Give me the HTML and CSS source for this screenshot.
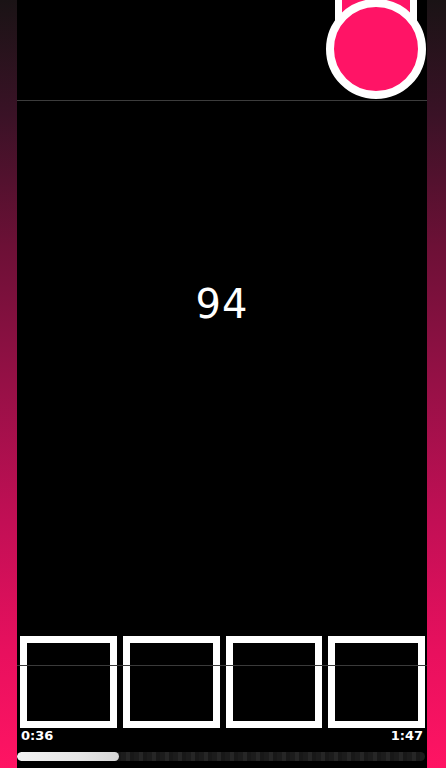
FILE: index.html
```html
<!DOCTYPE html>
<html>
<head>
<meta charset="utf-8">
<link rel="stylesheet" href="styles.css">
</head>
<body>
<div class="frame">
  <main class="screen">
    <header class="top">
      <div class="knob-stem"></div>
      <div class="knob"></div>
    </header>
    <section class="middle">
      <div class="count">94</div>
    </section>
    <footer class="bottom">
      <div class="frames">
        <div class="thumb"></div>
        <div class="thumb"></div>
        <div class="thumb"></div>
        <div class="thumb"></div>
      </div>
      <div class="times">
        <span>0:36</span>
        <span>1:47</span>
      </div>
      <div class="progress"><div class="progress-fill" style="width:25%"></div></div>
    </footer>
  </main>
</div>
</body>
</html>
```
FILE: styles.css
```css
html, body {
  margin: 0;
  padding: 0;
  height: 768px;
  overflow: hidden;
}
body {
  background: linear-gradient(180deg, #1a1315 0%, #3a1226 15%, #6c1036 32%, #961046 50%, #c20f55 68%, #e8105e 85%, #ff1463 100%);
  font-family: "Open Sans", "DejaVu Sans", sans-serif;
}
.frame {
  display: flex;
  height: 768px;
  padding: 0 19px 0 17px;
}
.screen {
  flex: 1;
  background: #000;
  display: flex;
  flex-direction: column;
  position: relative;
}
.top {
  height: 100px;
  border-bottom: 1px solid #3c3c3c;
  position: relative;
}
.knob-stem {
  position: absolute;
  left: 318px;
  top: -10px;
  width: 68px;
  height: 28px;
  background: #ff1466;
  border: 7px solid #fff;
  border-top: none;
}
.knob {
  position: absolute;
  left: 309px;
  top: -1px;
  width: 84px;
  height: 84px;
  border-radius: 50%;
  background: #ff1466;
  border: 8px solid #fff;
}
.middle {
  flex: 1;
  display: flex;
  justify-content: center;
  padding-top: 181px;
}
.count {
  color: #fff;
  font-family: "DejaVu Sans", sans-serif;
  font-size: 40px;
  font-weight: 400;
  line-height: 44px;
  height: 44px;
  letter-spacing: 1px;
}
.bottom {
  padding: 0 2px 7px 3px;
}
.frames {
  display: grid;
  grid-template-columns: repeat(4, 1fr);
  column-gap: 6px;
  position: relative;
}
.frames::after {
  content: "";
  position: absolute;
  left: -3px;
  right: -2px;
  top: 29px;
  height: 1px;
  background: #3a3a3a;
}
.thumb {
  height: 78px;
  border: 7px solid #fff;
  background: #000;
}
.times {
  display: flex;
  justify-content: space-between;
  color: #fff;
  font-family: "DejaVu Sans", sans-serif;
  font-weight: 700;
  font-size: 13px;
  line-height: 15px;
  height: 24px;
  padding: 0 2px 0 1px;
}
.progress {
  height: 9px;
  margin: 0 0 0 -3px;
  border-radius: 5px;
  background: repeating-linear-gradient(90deg, #1c1c1c 0px, #1c1c1c 5px, #262626 5px, #262626 9px, #181818 9px, #181818 13px);
  overflow: hidden;
}
.progress-fill {
  height: 100%;
  background: linear-gradient(90deg, #f2f2f2, #e6e6e6 60%, #d6d6d6);
  border-radius: 5px;
}
```
